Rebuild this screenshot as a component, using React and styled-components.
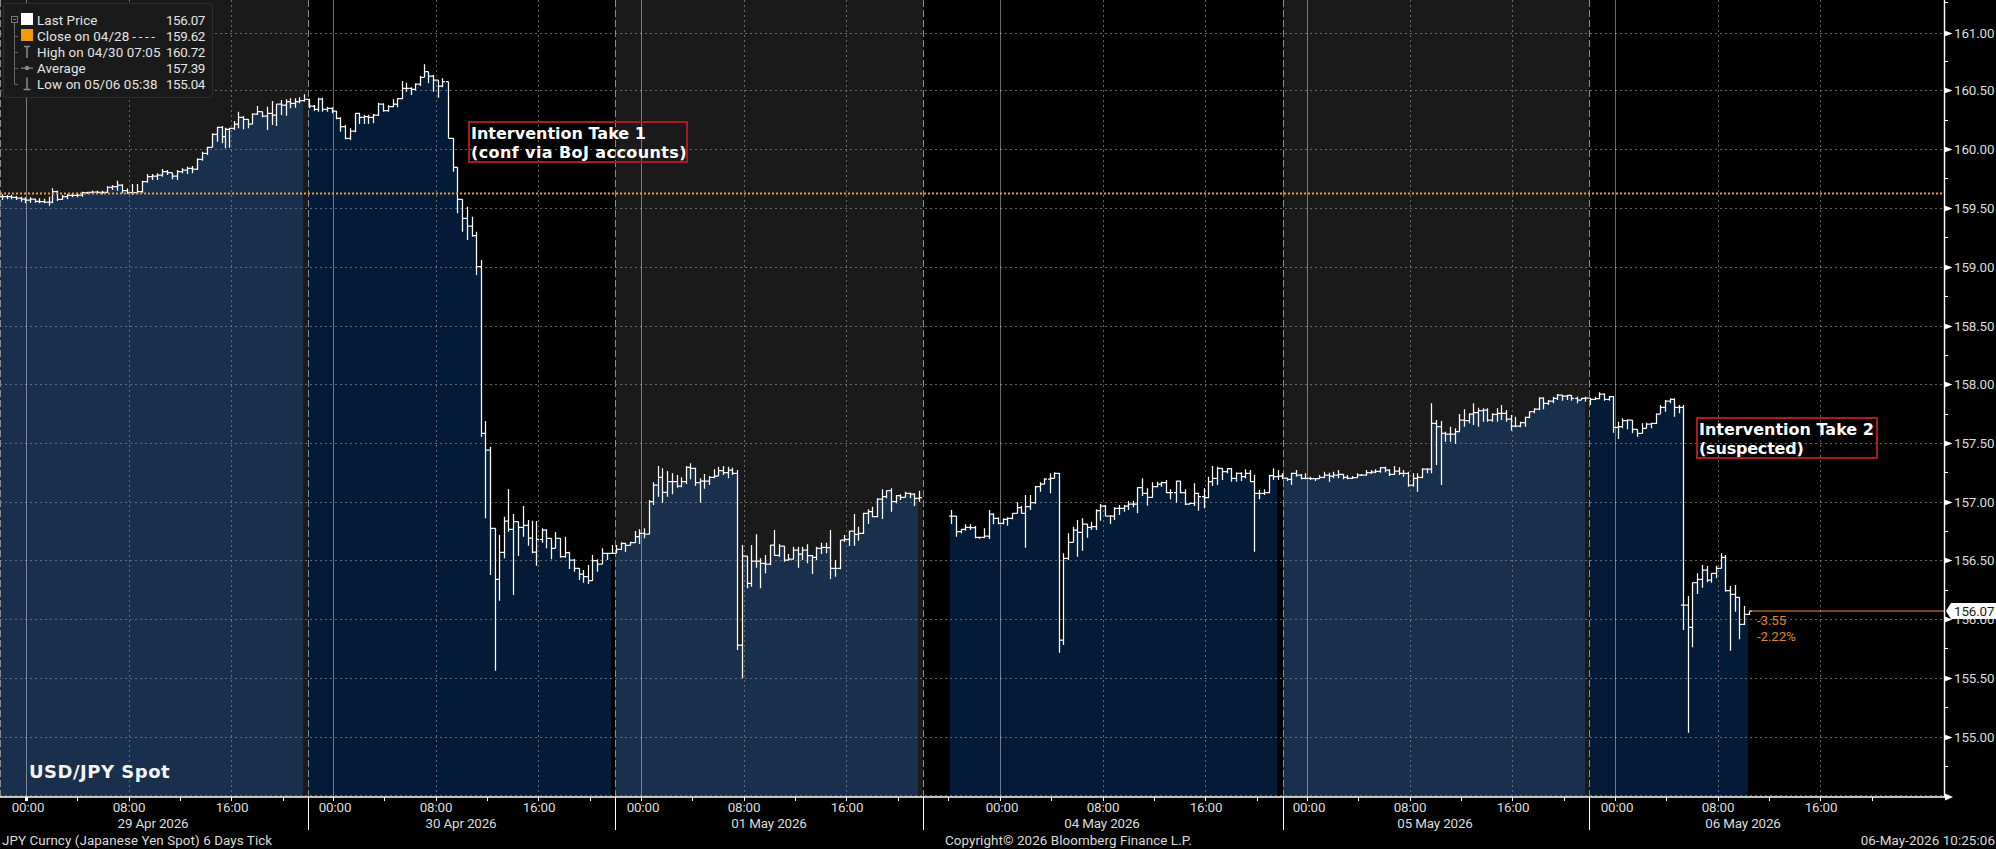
import React from 'react';
import styled, { createGlobalStyle } from 'styled-components';

const GlobalStyle = createGlobalStyle`
  html, body { margin: 0; padding: 0; background: #000; }
  body { width: 1996px; height: 849px; overflow: hidden; font-family: Roboto, "Liberation Sans", sans-serif; }
`;

const Page = styled.div`
  width: 1996px;
  height: 849px;
  display: flex;
  flex-direction: column;
  background: #000;
  color: #ddd;
`;
const ChartWrap = styled.div`
  position: relative;
  width: 1996px;
  height: 831px;
  flex: none;
`;
const ChartSvg = styled.svg`
  display: block;
  text { font-family: Roboto, "Liberation Sans", sans-serif; font-size: 13.4px; fill: #dcdcdc; letter-spacing: -0.15px; }
  text.delta { fill: #d98a2e; }
  text.tag { fill: #1a1a1a; }
`;
const Footer = styled.footer`
  flex: 1;
  display: grid;
  grid-template-columns: 943px 1fr auto;
  align-items: center;
  padding: 0 1px 0 2px;
  font-size: 13.4px;
  letter-spacing: 0.08px;
  color: #dcdcdc;
  white-space: nowrap;
`;
const Legend = styled.div`
  position: absolute;
  left: 3px;
  top: 3px;
  width: 210px;
  height: 95px;
  box-sizing: border-box;
  padding: 8px 7px 0 0;
  background: #1a1a1a;
  border: 1px solid #2e2e2e;
  border-radius: 3px;
`;
const LegendRow = styled.div`
  height: 16px;
  display: grid;
  grid-template-columns: 33px 1fr auto;
  align-items: center;
  font-size: 13.4px;
  letter-spacing: 0.1px;
  color: #e4e4e4;
  white-space: nowrap;
  svg { display: block; }
`;
const LegendValue = styled.span`
  letter-spacing: -0.35px;
`;
const LegendDash = styled.span`
  margin-left: 3px;
  letter-spacing: 2.6px;
`;
const Note = styled.div`
  position: absolute;
  left: ${p => p.$x}px;
  top: ${p => p.$y}px;
  width: ${p => p.$w}px;
  height: ${p => p.$h}px;
  box-sizing: border-box;
  padding: 0.5px 0 0 1px;
  border: 2px solid #a81c20;
  font: 700 16px/19px "DejaVu Sans", sans-serif;
  color: #fff;
  white-space: nowrap;
`;
const NoteLine = styled.div`
  letter-spacing: ${p => p.$track || 0}px;
`;
const ChartTitle = styled.div`
  position: absolute;
  left: 29px;
  top: 761px;
  font: 700 18px/22px "DejaVu Sans", sans-serif;
  letter-spacing: 0.5px;
  color: #f4f4f4;
`;

// Bars read from the picture: [x, high, low, close] in zoomed (3x) coordinates with an origin
const sections = [
  { ox: 0, oy: 0, bars: [
    [5,583,600,590],[20,585,598,590],[33,585,598,592],[48,588,600,594],[62,590,605,597],[76,592,610,600],[90,592,608,597],[104,598,608,604],[118,595,610,605],[133,596,610,606],[147,590,617,606],[155,565,610,575],[170,572,603,598],[185,585,600,590],[200,582,598,586],[215,580,592,586],[230,578,592,585],[245,575,590,578],[260,575,582,577],[275,572,582,576],[290,572,582,577],[305,572,583,577],[320,558,578,562],[335,555,570,560],[350,542,572,555],[365,553,580,572],[380,565,582,578],[395,552,585,578],[410,552,582,575],[425,542,578,545],[440,522,548,530],[455,522,540,528],[470,520,540,525],[485,507,530,515],[500,510,525,518],[515,518,538,528],[530,510,540,515],[545,505,520,510],[560,500,522,505],[575,498,520,507],[590,475,510,478],[605,455,482,460],[620,440,465,442],[635,400,442,403],[650,380,425,382],[665,378,430,410],[675,383,445,388],[688,383,443,385],[702,363,390,372],[715,335,385,352],[730,348,388,358],[743,358,385,372],[757,340,372,342],[772,318,345,335],[786,335,352,348],[800,320,390,340],[815,303,375,345],[828,318,378,312],[843,300,345,315],[857,298,347,305],[870,295,325,310],[885,295,323,305],[898,292,310,302],[911,283,305,298],
    [928,297,325,318],[942,315,333,328],[955,293,335,297],[967,293,335,328],[981,320,335,325],[995,322,340,333],[1008,333,358,355],[1021,352,395,380],[1036,375,418,415],[1050,385,420,393],[1064,340,397,340],[1078,338,372,352],[1092,345,372,350],[1105,345,372,352],[1120,342,370,345],[1135,308,348,312],[1150,310,335,332],[1165,315,335,320],[1180,298,322,312],[1192,295,322,296],[1205,243,298,265],[1218,248,275,265],[1232,262,285,268],[1246,250,272,252],[1260,228,258,232],[1272,193,232,215],[1285,215,250,228],[1299,225,275,240],[1313,240,293,258],[1327,235,262,245],[1345,245,415,415]
  ]},
  { ox: 400, oy: 40, bars: [
    [158,295,395,382],[172,382,520,478],[187,478,575,535],[200,500,600,558],[215,530,590,587],[228,575,705,680],[242,660,1190,1180]
  ]},
  { ox: 460, oy: 400, bars: [
    [76,63,355,150],[90,140,525,385],[104,385,812,538],[118,405,602,457],[133,350,475,363],[145,267,395,388],[160,342,585,365],[175,365,468,382],[188,318,410,376],[203,360,437,414],[217,362,460,456],[229,363,497,418],[245,385,428,390],[258,388,445,415],[272,415,478,445],[286,396,445,415],[300,415,473,470],[314,410,473,458],[328,455,507,480],[342,477,515,505],[356,505,540,522],[370,510,548,530],[383,495,552,542],[397,465,543,482],[412,478,515,492],[425,445,493,460],[440,458,480,460],[455,435,462,460],
    [468,435,450,448],[482,427,450,430],[496,428,456,436],[510,425,432,428],[524,393,428,410],[538,388,432,400],[552,385,415,402],[566,300,403,305],[580,247,315,255],[593,198,290,232],[607,205,308,277],[622,213,290,245],[635,220,283,245],[650,225,263,258],[663,232,262,245],[677,198,252,202],[691,190,238,205],[705,203,258,248],[719,235,308,243],[733,222,266,243],[747,228,255,232],[761,208,235,228],[775,200,228,212],[789,198,225,218],[803,200,235,210],[817,203,225,220],[831,210,750,735],[845,435,835,468],[860,468,565,550],[874,435,560,483],[887,403,503,483],[901,475,565,490],[916,465,520,492],[929,435,495,435],[943,390,467,466],[957,433,470,438],[971,438,485,480],[985,462,482,477],[999,440,478,450],[1013,440,503,462],[1027,440,480,450],[1041,433,490,467],[1055,465,522,472],[1069,440,480,445],[1083,428,462,442],[1097,428,460,443],[1111,390,537,505],[1125,480,530,505],[1139,420,508,420],[1153,405,425,418],[1167,392,438,393],[1181,342,437,403],[1195,380,422,400],[1209,338,402,340],[1223,328,372,335],[1237,320,352,350],[1251,295,352,297],[1265,268,357,290],[1279,273,295,272],[1293,265,335,305],[1307,285,310,287],[1321,283,300,292],[1335,275,292,280],[1349,278,295,282],[1363,280,318,295],[1376,272,305,293]
  ]},
  { ox: 900, oy: 430, bars: [
    [152,240,282,258],[168,258,320,305],[182,297,310,298],[196,283,302,292],[210,283,300,293],[224,288,325,322],[238,320,327,322],[252,295,325,318],[266,240,327,252],[280,250,283,265],[294,262,283,280],[308,265,283,268],[322,262,287,265],[336,250,268,250],[350,217,250,233],[362,228,250,250],[376,195,353,230],[390,195,240,218],[405,168,222,170],[419,157,185,162],[433,145,163,147],[449,130,190,145],[462,127,145,130],[476,130,668,630],[490,370,645,385],[504,310,390,337],[518,290,337,300],[532,270,380,307],[545,265,362,282],[560,282,323,292],[574,275,300,290],[587,238,300,242],[601,222,272,228],[615,225,258,258],[629,255,282,258],[643,232,270,235],[657,225,255,235],[671,225,245,228],[685,213,240,222],[699,212,232,222],[712,172,250,173],[727,145,198,190],[742,175,227,202],[756,157,203,170],[770,155,172,162],[784,155,170,158],[797,150,190,188],[811,178,208,188],[827,152,218,153],[841,153,190,188],[855,178,225,222],[868,218,224,220],[881,160,228,190],[895,188,242,200],[911,175,235,203],[923,140,205,155],[937,108,168,145],[952,110,165,115],[965,115,150,125],[980,115,130,116],[994,115,155,145],[1008,127,155,130],[1022,127,153,140],[1036,118,145,130],[1049,120,155,155],[1063,135,365,190],[1078,180,208,190],[1092,178,195,188],[1106,135,190,137],[1120,115,150,140],[1133,120,150,138]
  ]},
  { ox: 1250, oy: 370, bars: [
    [97,310,328,324],[110,323,333,328],[124,308,345,310],[138,300,320,315],[152,312,328,325],[166,310,328,325],[180,320,330,326],[194,325,333,326],[208,315,327,322],[222,305,325,315],[236,308,335,318],[250,305,325,315],[264,300,325,313],[278,313,328,322],[292,315,328,325],[306,318,326,323],[320,310,323,315],[334,312,318,315],[348,300,317,308],[362,300,312,306],[376,298,310,304],[390,292,308,293],[404,290,307,300],[418,298,318,313],[432,288,315,303],[446,292,315,310],[460,300,320,310],[474,305,350,345],[488,310,350,325],[502,310,365,322],[516,295,325,297],[530,295,310,297],[544,100,310,160],[558,150,285,170],[572,153,345,190],[586,185,215,192],[600,170,215,192],[614,175,222,185],[628,132,187,150],[642,118,170,152],[656,130,160,132],[670,100,165,128],[685,113,170,122],[698,115,155,120],[712,115,155,150],[726,130,155,133],[740,115,155,130],[754,105,150,130],[768,120,155,147],[782,135,182,168],[796,140,172,168],[810,155,172,158],[824,140,170,142],[838,125,145,125],[852,115,130,117],[866,82,120,84],[880,82,118,100],[894,90,105,93],[908,80,100,85],[922,72,90,75],[936,75,92,78],[950,75,90,76],[964,76,92,85],[980,80,100,90],[992,83,90,85],[1006,80,95,84],
    [1020,85,105,88],[1034,80,90,86],[1048,67,88,72],[1062,70,92,88],[1076,78,92,80],[1090,78,188,172],[1104,155,207,170],[1117,145,175,152],[1131,148,178,150],[1145,150,190,178],[1160,180,200,190],[1175,160,180,175],[1189,158,175,162],[1203,158,175,160],[1217,130,162,132],[1231,105,130,112],[1245,90,125,93],[1259,85,100,88],[1272,85,140,112],[1286,105,130,112],[1300,105,780,705]
  ]},
  { ox: 1640, oy: 520, bars: [
    [130,228,328,255],[143,228,638,322],[157,188,382,188],[172,160,222,178],[186,135,203,150],[200,138,187,180],[214,160,188,160],[228,137,175,145],[242,100,145,112],[256,105,215,212],[270,198,392,223],[284,195,275,232],[298,232,358,313],[312,258,315,283],[326,272,285,273]
  ]}
];

const bars = sections.flatMap(s => s.bars.map(([x, hi, lo, c]) => ({
  x: s.ox + x / 3,
  hi: s.oy + hi / 3,
  lo: s.oy + lo / 3,
  c: s.oy + c / 3
})));

const BOTTOM = 796;
const fmt = n => Math.round(n * 10) / 10;

const barPath = bars.map((b, i) => {
  const x = Math.round(b.x) + 0.5;
  const prev = i > 0 && b.x - bars[i - 1].x < 8 ? bars[i - 1].c : b.c;
  const open = `M${x - 2.4} ${fmt(prev)}H${x}`;
  const stem = `M${x} ${fmt(Math.min(b.hi, prev, b.c))}V${fmt(Math.max(b.lo, prev, b.c))}`;
  const close = `M${x} ${fmt(b.c)}H${x + 2.4}`;
  return open + stem + close;
}).join('');

const areas = [
  { from: 0, to: 303, fill: '#18304c' },
  { from: 308, to: 611, fill: '#031b37' },
  { from: 615, to: 918, fill: '#18304c' },
  { from: 950, to: 1277, fill: '#031b37' },
  { from: 1283, to: 1585, fill: '#18304c' },
  { from: 1589, to: 1748, fill: '#031b37' }
];

const areaPath = (from, to) => {
  const set = bars.filter(b => b.x >= from - 2 && b.x <= to + 3);
  let d = `M${from} ${BOTTOM}V${fmt(set[0].c)}`;
  set.forEach((b, i) => {
    const next = set[i + 1] ? Math.round(set[i + 1].x) + 0.5 : to;
    d += `H${Math.min(next, to)}`;
    if (set[i + 1]) d += `V${fmt(set[i + 1].c)}`;
  });
  return d + `V${BOTTOM}Z`;
};

const gridY = [33, 90, 149, 208, 267, 326, 384, 443, 502, 560, 619, 678, 737, 795];
const labels = ['161.00','160.50','160.00','159.50','159.00','158.50','158.00','157.50','157.00','156.50','156.00','155.50','155.00'];
const minorY = [2, 61, 120, 178, 237, 296, 355, 414, 472, 531, 590, 648, 707, 766];
const midnights = [26, 333, 641, 1000, 1307, 1615];
const dayEdges = [308, 615, 923, 1283, 1589];
const dashX = midnights.flatMap(m => [m + 103, m + 205]);
const hourLabels = midnights.flatMap(m => [
  { x: m + 2, t: '00:00' }, { x: m + 103, t: '08:00' }, { x: m + 206, t: '16:00' }
]);
const dates = [
  { x: 153, t: '29 Apr 2026' }, { x: 461, t: '30 Apr 2026' }, { x: 769, t: '01 May 2026' },
  { x: 1102, t: '04 May 2026' }, { x: 1435, t: '05 May 2026' }, { x: 1743, t: '06 May 2026' }
];
const timeTicks = [26, 333, 641, 948, 1000, 1307, 1615].flatMap(m =>
  m === 948 ? [948] : [0, 51, 103, 154, 205, 257].map(d => m + d)
).filter(x => x < 1944);

const TreeIcon = ({ kind, last }) => (
  <svg width="33" height="16" viewBox="0 0 33 16">
    {kind === 'white' ? (
      <g stroke="#777" fill="none">
        <rect x="7.5" y="4.5" width="6" height="6" />
        <path d="M9 7.5h3M10.5 10.5V16" />
      </g>
    ) : (
      <path d={`M10.5 0V${last ? 8.5 : 16}M10.5 8.5H14`} stroke="#666" fill="none" />
    )}
    {kind === 'white' && <rect x="17" y="1" width="12" height="12" fill="#fff" />}
    {kind === 'orange' && <rect x="17" y="1" width="12" height="12" fill="#f39a0b" />}
    {kind === 'high' && <path d="M20 2.5h6M23 2.5V14" stroke="#8a8a8a" strokeWidth="1.5" fill="none" />}
    {kind === 'avg' && (
      <g fill="#8a8a8a">
        <rect x="17" y="7.5" width="12" height="1.2" />
        <circle cx="23" cy="8" r="2.2" />
      </g>
    )}
    {kind === 'low' && <path d="M23 1.5V13M19.5 13.5h7" stroke="#8a8a8a" strokeWidth="1.5" fill="none" />}
  </svg>
);

const legendRows = [
  { kind: 'white', label: 'Last Price', value: '156.07' },
  { kind: 'orange', label: 'Close on 04/28', dash: '----', value: '159.62' },
  { kind: 'high', label: 'High on 04/30 07:05', value: '160.72' },
  { kind: 'avg', label: 'Average', value: '157.39' },
  { kind: 'low', label: 'Low on 05/06 05:38', value: '155.04', last: true }
];

export default function App() {
  return (
    <Page>
      <GlobalStyle />
      <ChartWrap>
        <ChartSvg width="1996" height="831" viewBox="0 0 1996 831">
          {/* session bands */}
          <g shapeRendering="crispEdges">
            <rect x="0" y="0" width="308" height="797" fill="#1a1a1a" />
            <rect x="615" y="0" width="308" height="797" fill="#1a1a1a" />
            <rect x="1283" y="0" width="306" height="797" fill="#1a1a1a" />
          </g>
          {areas.map(a => <path key={a.from} d={areaPath(a.from, a.to)} fill={a.fill} />)}
          {/* grid */}
          <g shapeRendering="crispEdges" strokeWidth="1">
            {gridY.map(y => <path key={y} d={`M0 ${y + 0.5}H1944`} stroke="#7c7c7c" strokeOpacity="0.8" strokeDasharray="2 3" />)}
            {dashX.map(x => <path key={x} d={`M${x + 0.5} 0V797`} stroke="#7c7c7c" strokeOpacity="0.8" strokeDasharray="2 3" />)}
            {midnights.map(x => <path key={x} d={`M${x + 0.5} 0V797`} stroke="#fff" strokeOpacity="0.42" />)}
            {[0, ...dayEdges].map(x => <path key={x} d={`M${x + 0.5} 0V797`} stroke="#8a8a8a" strokeDasharray="7 3" />)}
          </g>
          <path d={barPath} stroke="#fff" strokeWidth="1.25" fill="none" />
          <path d="M0 193.5H1942" stroke="#e0a040" strokeWidth="1.8" strokeDasharray="2 2" />
          <path d="M1749 611H1944" stroke="#e0913c" strokeWidth="1.2" />
          {/* y axis */}
          <path d="M1944.5 0V797M0 797H1945" stroke="#fff" strokeWidth="1.4" fill="none" />
          <path d="M1945 793.5L1953 797L1945 800.5Z" fill="#fff" />
          {minorY.map(y => <path key={y} d={`M1944 ${y + 0.5}H1948`} stroke="#fff" />)}
          {labels.map((t, i) => (
            <g key={t}>
              <path d={`M1944.5 ${gridY[i] - 2.5}L1952.5 ${gridY[i] + 0.5}L1944.5 ${gridY[i] + 3.5}Z`} fill="#fff" />
              <text x="1954" y={gridY[i] + 5}>{t}</text>
            </g>
          ))}
          <path d="M1946 611L1951 603H1996V619H1951Z" fill="#fff" />
          <text className="tag" x="1954" y="616">156.07</text>
          <text className="delta" x="1757" y="625">-3.55</text>
          <text className="delta" x="1757" y="641">-2.22%</text>
          {/* time axis */}
          {timeTicks.map(x => <path key={x} d={`M${x + 0.5} 797V801`} stroke="#fff" />)}
          <rect x="25" y="797" width="3" height="4" fill="#fff" />
          {dayEdges.map(x => <path key={x} d={`M${x + 0.5} 797V830`} stroke="#fff" />)}
          {hourLabels.map(h => <text key={h.x} x={h.x} y="811.5" textAnchor="middle">{h.t}</text>)}
          {dates.map(d => <text key={d.t} x={d.x} y="828" textAnchor="middle">{d.t}</text>)}
        </ChartSvg>
        <Legend>
          {legendRows.map(r => (
            <LegendRow key={r.kind}>
              <TreeIcon kind={r.kind} last={r.last} />
              <span>{r.label}{r.dash && <LegendDash>{r.dash}</LegendDash>}</span>
              <LegendValue>{r.value}</LegendValue>
            </LegendRow>
          ))}
        </Legend>
        <Note $x={468} $y={121} $w={220} $h={42}>
          <NoteLine>Intervention Take 1</NoteLine>
          <NoteLine $track={0.4}>(conf via BoJ accounts)</NoteLine>
        </Note>
        <Note $x={1696} $y={417} $w={182} $h={42}>
          <NoteLine>Intervention Take 2</NoteLine>
          <NoteLine $track={-0.2}>(suspected)</NoteLine>
        </Note>
        <ChartTitle>USD/JPY Spot</ChartTitle>
      </ChartWrap>
      <Footer>
        <span>JPY Curncy (Japanese Yen Spot) 6 Days Tick</span>
        <span>Copyright© 2026 Bloomberg Finance L.P.</span>
        <span>06-May-2026 10:25:06</span>
      </Footer>
    </Page>
  );
}
